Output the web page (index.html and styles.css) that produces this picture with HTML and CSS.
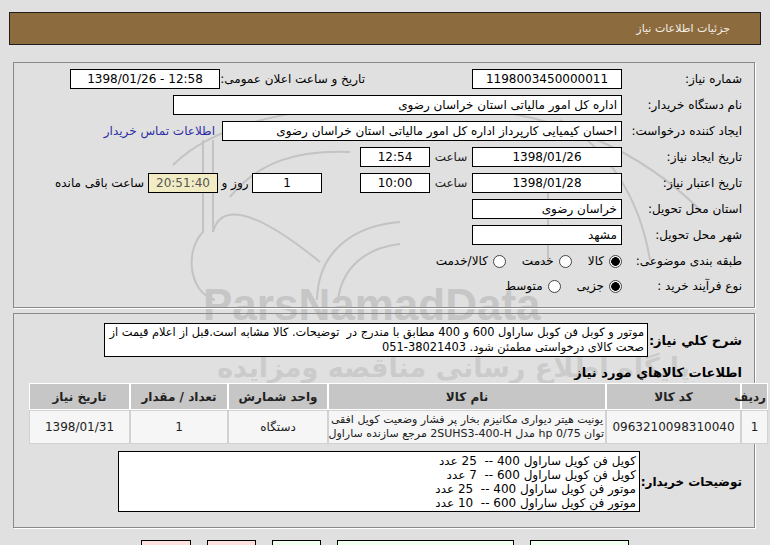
FILE: index.html
```html
<!DOCTYPE html>
<html lang="fa" dir="rtl">
<head>
<meta charset="utf-8">
<title>جزئیات اطلاعات نیاز</title>
<link rel="stylesheet" href="styles.css">
</head>
<body>
<div class="page">

	<!-- faint watermark behind the form -->
	<div class="watermark">
		<svg width="770" height="545" viewBox="0 0 770 545">
			<g fill="none" stroke="#c3c3c3" stroke-width="2">
				<path d="M203 140 L203 232 C185 250 188 292 215 300"/>
				<path d="M213 140 L213 232 C220 205 250 205 320 262"/>
				<path d="M317 300 C318 252 352 226 400 222"/>
				<path d="M338 300 C342 268 365 248 400 244"/>
				<path d="M173 165 C220 118 330 96 470 108 C560 116 640 150 700 210"/>
				<path d="M230 197 C260 160 300 150 350 152"/>
				<path d="M520 190 L548 190 L548 262 L530 262"/>
				<path d="M560 120 C610 150 640 200 650 260"/>
			</g>
		</svg>
		<div class="wm-latin">ParsNamadData</div>
		<div class="wm-script">پارس نماد داده</div>
		<div class="wm-fa">پایگاه اطلاع رسانی مناقصه ومزایده</div>
		<div class="wm-num">۰۲۱-۸۸۳۴۹۶۷۰</div>
	</div>

	<div class="titlebar">جزئیات اطلاعات نیاز</div>

	<div class="panel info">
		<div class="row">
			<span class="lbl">شماره نیاز:</span>
			<span class="box w150 c">1198003450000011</span>
			<span class="lbl2">تاریخ و ساعت اعلان عمومی:</span>
			<span class="box w150 c" dir="ltr">1398/01/26 - 12:58</span>
		</div>
		<div class="row">
			<span class="lbl">نام دستگاه خریدار:</span>
			<span class="box w449">اداره کل امور مالیاتی استان خراسان رضوی</span>
		</div>
		<div class="row">
			<span class="lbl">ایجاد کننده درخواست:</span>
			<span class="box w400">احسان کیمیایی کارپرداز اداره کل امور مالیاتی استان خراسان رضوی</span>
			<a class="contact" href="#">اطلاعات تماس خریدار</a>
		</div>
		<div class="row">
			<span class="lbl">تاریخ ایجاد نیاز:</span>
			<span class="box w150 c">1398/01/26</span>
			<span class="unit">ساعت</span>
			<span class="box w70 c">12:54</span>
		</div>
		<div class="row">
			<span class="lbl">تاریخ اعتبار نیاز:</span>
			<span class="box w150 c">1398/01/28</span>
			<span class="unit">ساعت</span>
			<span class="box w70 c">10:00</span>
			<span class="box w70 c days">1</span>
			<span class="unit2">روز و</span>
			<span class="box w70 c remain">20:51:40</span>
			<span class="remain-lbl">ساعت باقی مانده</span>
		</div>
		<div class="row">
			<span class="lbl">استان محل تحویل:</span>
			<span class="box w150">خراسان رضوی</span>
		</div>
		<div class="row">
			<span class="lbl">شهر محل تحویل:</span>
			<span class="box w150">مشهد</span>
		</div>
		<div class="row">
			<span class="lbl">طبقه بندی موضوعی:</span>
			<span class="opt"><i class="radio on"></i>کالا</span>
			<span class="opt"><i class="radio"></i>خدمت</span>
			<span class="opt"><i class="radio"></i>کالا/خدمت</span>
		</div>
		<div class="row short">
			<span class="lbl">نوع فرآیند خرید :</span>
			<span class="opt"><i class="radio on"></i>جزیی</span>
			<span class="opt"><i class="radio"></i>متوسط</span>
		</div>
	</div>

	<div class="panel goods">
		<div class="desc-row">
			<span class="lbl-b w94">شرح کلي نیاز:</span>
			<div class="descbox">موتور و کوبل فن کوبل ساراول 600 و 400 مطابق با مندرج در&nbsp; توضیحات. کالا مشابه است.قبل از اعلام قیمت از<br>صحت کالای درخواستی مطمئن شود. 38021403-051</div>
		</div>

		<div class="heading">اطلاعات کالاهاي مورد نیاز</div>

		<table class="items">
			<thead>
				<tr>
					<th class="col-n">ردیف</th>
					<th class="col-code">کد کالا</th>
					<th class="col-name">نام کالا</th>
					<th class="col-unit">واحد شمارش</th>
					<th class="col-qty">تعداد / مقدار</th>
					<th class="col-date">تاریخ نیاز</th>
				</tr>
			</thead>
			<tbody>
				<tr>
					<td>1</td>
					<td>0963210098310040</td>
					<td class="name">یونیت هیتر دیواری مکانیزم بخار پر فشار وضعیت کویل افقی<br>توان 0/75 hp مدل 2SUHS3-400-H مرجع سازنده ساراول</td>
					<td>دستگاه</td>
					<td>1</td>
					<td>1398/01/31</td>
				</tr>
			</tbody>
		</table>

		<div class="notes-row">
			<span class="lbl-b w102">توضیحات خریدار:</span>
			<div class="notebox">
				کویل فن کویل ساراول 400 --&nbsp; 25 عدد<br>
				کویل فن کویل ساراول 600 --&nbsp; 7 عدد<br>
				موتور فن کویل ساراول 400 --&nbsp; 25 عدد<br>
				موتور فن کویل ساراول 600 --&nbsp; 10 عدد
			</div>
		</div>
	</div>

	<div class="buttons">
		<span class="btn green w99"></span>
		<span class="btn green w177"></span>
		<span class="btn green w49"></span>
		<span class="btn pink w49"></span>
		<span class="btn pink w50"></span>
	</div>
</div>
</body>
</html>
```

FILE: styles.css
```css
body {
	margin: 0;
	background-color: #e0e0e0;
	font-family: "DejaVu Sans", Tahoma, sans-serif;
	font-size: 12px;
	color: #000;
}

.page {
	position: relative;
	width: 770px;
	height: 545px;
	overflow: hidden;
	direction: rtl;
}

/* watermark */
.watermark {
	position: absolute;
	left: 0;
	top: 0;
	width: 770px;
	height: 545px;
	z-index: 0;
	pointer-events: none;
}

.watermark svg {
	position: absolute;
	left: 0;
	top: 0;
}

.wm-latin {
	position: absolute;
	left: 203px;
	top: 280px;
	font-family: "Liberation Sans", Arial, sans-serif;
	font-weight: bold;
	font-size: 44px;
	color: #c6c6c6;
	direction: ltr;
}

.wm-script {
	position: absolute;
	left: 360px;
	top: 322px;
	font-size: 19px;
	font-style: italic;
	color: #cdcdcd;
}

.wm-fa {
	position: absolute;
	right: 80px;
	top: 352px;
	font-size: 27px;
	font-weight: bold;
	color: #cbcbcb;
	white-space: nowrap;
}

.wm-num {
	position: absolute;
	left: 340px;
	top: 393px;
	font-size: 36px;
	font-weight: bold;
	color: #cbcbcb;
	direction: ltr;
}

.titlebar,
.panel,
.buttons {
	position: relative;
	z-index: 1;
}

.titlebar {
	margin: 12px 9px 0 9px;
	height: 31px;
	line-height: 31px;
	border: 1px solid #1e1e1e;
	background-color: #8c6b3f;
	color: #f3eee4;
	padding-right: 30px;
	font-size: 11px;
}

.panel {
	box-sizing: border-box;
	margin: 17px 15px 0 13px;
	border: 1px solid #8a8a8a;
	box-shadow: 1px 1px 0 #fff;
	padding: 3px 12px 0 0;
}

.info {
	height: 246px;
}

.row {
	display: flex;
	align-items: center;
	height: 26px;
	white-space: nowrap;
}

.row.short {
	height: 24px;
}

.lbl {
	flex: none;
	width: 120px;
}

.box {
	flex: none;
	box-sizing: border-box;
	height: 20px;
	line-height: 18px;
	border: 1px solid #000;
	background-color: #fff;
	padding: 0 4px;
	overflow: hidden;
}

.c { text-align: center; }
.w70 { width: 70px; }
.w150 { width: 150px; }
.w400 { width: 400px; }
.w449 { width: 449px; }

.lbl2 {
	margin-right: 107px;
	width: 145px;
}

.contact {
	margin-right: 7px;
	color: #2d2da6;
	text-decoration: none;
}

.unit {
	width: 42px;
	text-align: center;
	color: #222;
}

.days {
	margin-right: 38px;
}

.unit2 {
	width: 34px;
	text-align: center;
}

.remain {
	background-color: #f1ecc3;
	color: #555;
}

.remain-lbl {
	margin-right: 4px;
}

.opt {
	display: flex;
	align-items: center;
	margin-left: 16px;
}

.opt:first-of-type {
	margin-right: 4px;
}

.radio {
	display: inline-block;
	box-sizing: border-box;
	width: 13px;
	height: 13px;
	border-radius: 50%;
	border: 1px solid #444;
	background-color: #fff;
	margin-left: 5px;
}

.radio.on {
	background: radial-gradient(circle, #000 0 4px, #fff 4.6px);
}

/* second panel */
.goods {
	margin-top: 5px;
	height: 215px;
	padding-top: 9px;
}

.desc-row,
.notes-row {
	display: flex;
	align-items: center;
}

.lbl-b {
	flex: none;
	font-weight: bold;
	font-size: 13px;
	white-space: nowrap;
}

.w94 { width: 94px; }
.w102 { width: 102px; }

.notes-row .lbl-b {
	font-size: 12px;
}

.descbox {
	box-sizing: border-box;
	width: 544px;
	height: 34px;
	border: 1px solid #000;
	background-color: #fff;
	padding: 1px 3px;
	font-size: 11.4px;
	line-height: 15px;
	white-space: nowrap;
	overflow: hidden;
}

.heading {
	margin-top: 7px;
	height: 17px;
	line-height: 17px;
	font-weight: bold;
	font-size: 13px;
}

table.items {
	margin-top: 2px;
	margin-right: -26px;
	width: 739px;
	table-layout: fixed;
	border-collapse: separate;
	border-spacing: 0;
	background-color: #fff;
	font-size: 12px;
}

.items th,
.items td {
	box-sizing: border-box;
	padding: 1px;
}

.items th {
	height: 27px;
	background-color: #c6c6c6;
	border: 1px solid #fff;
	font-weight: bold;
	color: #222;
}

.items td {
	height: 34px;
	background-color: #f6f6f6;
	border: 1px solid #d2d2d2;
	text-align: center;
	color: #222;
	white-space: nowrap;
}

.items td.name {
	font-size: 11px;
	line-height: 14px;
}

.col-n { width: 27px; }
.col-code { width: 135px; }
.col-name { width: 278px; }
.col-unit { width: 100px; }
.col-qty { width: 98px; }
.col-date { width: 101px; }

.notes-row {
	margin-top: 7px;
}

.notebox {
	box-sizing: border-box;
	width: 522px;
	height: 61px;
	border: 1px solid #000;
	background-color: #fff;
	padding: 2px 3px;
	line-height: 14px;
	white-space: nowrap;
}

/* buttons row, cut by the bottom of the window */
.buttons {
	display: flex;
	justify-content: center;
	gap: 16px;
	margin-top: 12px;
}

.btn {
	display: block;
	box-sizing: border-box;
	height: 26px;
	border: 1px solid #000;
}

.btn.green { background-color: #f1fff1; }
.btn.pink { background-color: #fde0e0; }
.w49 { width: 49px; }
.w50 { width: 50px; }
.w99 { width: 99px; }
.w177 { width: 177px; }
```
